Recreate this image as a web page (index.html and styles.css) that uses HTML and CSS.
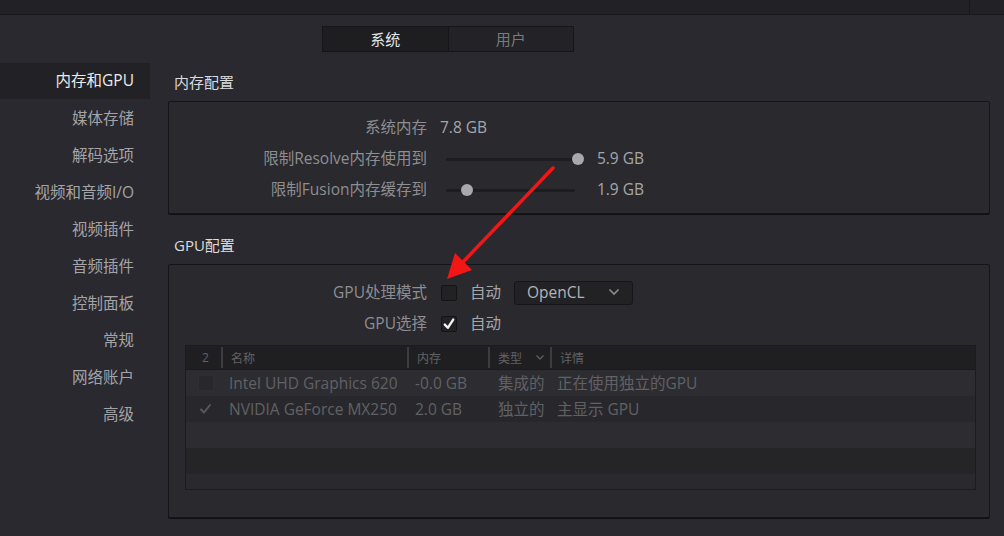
FILE: index.html
```html
<!DOCTYPE html>
<html lang="zh-CN">
<head>
<meta charset="utf-8">
<title>偏好设置</title>
<link rel="stylesheet" href="styles.css">
</head>
<body>
<div class="topbar"><div class="topbar-left"></div><div class="topbar-right"></div></div>

<div class="tabs">
  <div class="tab tab-active">系统</div>
  <div class="tab">用户</div>
</div>

<div class="layout">
  <nav class="sidebar">
    <div class="nav-item nav-active">内存和GPU</div>
    <div class="nav-item">媒体存储</div>
    <div class="nav-item">解码选项</div>
    <div class="nav-item">视频和音频I/O</div>
    <div class="nav-item">视频插件</div>
    <div class="nav-item">音频插件</div>
    <div class="nav-item">控制面板</div>
    <div class="nav-item">常规</div>
    <div class="nav-item">网络账户</div>
    <div class="nav-item">高级</div>
  </nav>

  <main class="main">
    <h2 class="section-title">内存配置</h2>
    <section class="panel mem-panel">
      <div class="row">
        <span class="label">系统内存</span>
        <span class="value">7.8 GB</span>
      </div>
      <div class="row">
        <span class="label">限制Resolve内存使用到</span>
        <div class="slider"><div class="track"></div><div class="knob" style="left: 100%"></div></div>
        <span class="slider-value">5.9 GB</span>
      </div>
      <div class="row">
        <span class="label">限制Fusion内存缓存到</span>
        <div class="slider"><div class="track track-short"></div><div class="knob" style="left: 16%"></div></div>
        <span class="slider-value">1.9 GB</span>
      </div>
    </section>

    <h2 class="section-title">GPU配置</h2>
    <section class="panel gpu-panel">
      <div class="row">
        <span class="label">GPU处理模式</span>
        <span class="checkbox"></span>
        <span class="value">自动</span>
        <div class="dropdown">
          <span>OpenCL</span>
          <svg class="chev" width="12" height="8" viewBox="0 0 12 8"><path d="M1.5 1.5 L6 6 L10.5 1.5" fill="none" stroke="#8c8c8f" stroke-width="1.6"/></svg>
        </div>
      </div>
      <div class="row">
        <span class="label">GPU选择</span>
        <span class="checkbox">
          <svg width="16" height="16" viewBox="0 0 16 16"><path d="M3.8 8.6 L6.8 11.8 L12.2 3.6" fill="none" stroke="#f2f2f2" stroke-width="2.4" stroke-linecap="round" stroke-linejoin="round"/></svg>
        </span>
        <span class="value">自动</span>
      </div>

      <div class="table">
        <div class="thead">
          <div class="th th-num">2</div>
          <div class="th">名称</div>
          <div class="th">内存</div>
          <div class="th th-type">类型<svg width="10" height="7" viewBox="0 0 10 7"><path d="M1.5 1.5 L5 5 L8.5 1.5" fill="none" stroke="#5c5c60" stroke-width="1.4"/></svg></div>
          <div class="th">详情</div>
        </div>
        <div class="tr tr-a">
          <div class="td td-num"><span class="mini-box"></span></div>
          <div class="td">Intel UHD Graphics 620</div>
          <div class="td">-0.0 GB</div>
          <div class="td">集成的</div>
          <div class="td">正在使用独立的GPU</div>
        </div>
        <div class="tr tr-b">
          <div class="td td-num"><svg width="14" height="12" viewBox="0 0 14 12"><path d="M2 6.5 L5 9.5 L11 2" fill="none" stroke="#58585c" stroke-width="2" stroke-linecap="round"/></svg></div>
          <div class="td">NVIDIA GeForce MX250</div>
          <div class="td">2.0 GB</div>
          <div class="td">独立的</div>
          <div class="td">主显示 GPU</div>
        </div>
        <div class="tr tr-a"></div>
        <div class="tr tr-c"></div>
        <div class="tr tr-end"></div>
      </div>
    </section>
  </main>
</div>

<svg class="arrow" width="1004" height="536" viewBox="0 0 1004 536">
  <line x1="553" y1="168" x2="462" y2="263" stroke="#f21616" stroke-width="3.5" stroke-linecap="round"/>
  <polygon points="447,279 472,270 455,253" fill="#f21616"/>
</svg>
</body>
</html>
```

FILE: styles.css
```css
* { box-sizing: border-box; }

html, body {
  margin: 0;
  padding: 0;
  width: 1004px;
  height: 536px;
  overflow: hidden;
  background: #29292f;
  font-family: "Open Sans", "Noto Sans CJK SC", sans-serif;
  font-size: 15.5px;
  color: #a2a2a6;
}

.topbar {
  display: flex;
  height: 15px;
  background: #222226;
  border-bottom: 1px solid #18181b;
}
.topbar-left { width: 969px; }
.topbar-right { flex: 1; border-left: 1px solid #18181b; }

.tabs {
  display: flex;
  width: 252px;
  height: 26px;
  margin: 11px 0 0 322px;
  border: 1px solid #161619;
  font-size: 15px;
}
.tab {
  flex: 1;
  display: flex;
  align-items: center;
  justify-content: center;
  background: #232327;
  color: #7a7a7e;
  line-height: 1;
}
.tab-active {
  background: #1e1e21;
  color: #e6e6e6;
  border-right: 1px solid #161619;
}

.layout {
  display: flex;
  margin-top: 11px;
}

.sidebar {
  width: 150px;
  flex: 0 0 150px;
  display: flex;
  flex-direction: column;
}
.nav-item {
  height: 37px;
  display: flex;
  align-items: center;
  justify-content: flex-end;
  padding: 0 16px 3px 0;
  color: #a4a4a8;
}
.nav-active {
  height: 36px;
  margin-bottom: 1px;
  background: #222226;
  color: #ebebeb;
}

.main {
  flex: 0 0 822px;
  margin-left: 18px;
}

.section-title {
  margin: 0;
  height: 38px;
  display: flex;
  align-items: center;
  padding: 0 0 2px 6px;
  font-size: 15px;
  font-weight: normal;
  color: #dcdcde;
}

.panel {
  border: 1px solid #151518;
  border-radius: 2px;
  box-shadow: 0 1px 0 #111113;
  background: #29292e;
}
.mem-panel {
  padding: 10px 0 8px;
  margin-bottom: 12px;
}
.gpu-panel {
  padding: 12px 0 27px;
}

.row {
  display: flex;
  align-items: center;
  height: 31px;
  gap: 13px;
  padding-bottom: 2px;
}
.label {
  width: 258px;
  text-align: right;
  color: #8e8e92;
}
.value { color: #a6a6aa; }

.slider {
  position: relative;
  width: 132px;
  height: 12px;
  margin-left: 6px;
  margin-top: 2px;
}
.track {
  position: absolute;
  left: 0;
  right: 0;
  top: 5px;
  height: 3px;
  border-radius: 2px;
  background: #1d1d20;
}
.track-short { right: 3px; }
.knob {
  position: absolute;
  top: 0;
  width: 12px;
  height: 12px;
  margin-left: -6px;
  border-radius: 50%;
  background: #a9a9ac;
}
.slider-value {
  width: 53px;
  text-align: right;
  color: #a6a6aa;
}

.checkbox {
  width: 16px;
  height: 16px;
  margin: 2px 0 0 1px;
  background: #222225;
  border: 1px solid #141416;
  border-radius: 2px;
  display: flex;
  align-items: center;
  justify-content: center;
}
.checkbox svg { display: block; flex: 0 0 16px; }

.dropdown {
  width: 119px;
  height: 24px;
  margin-top: 2px;
  display: flex;
  align-items: center;
  justify-content: space-between;
  padding: 0 12px 1px 12px;
  background: #222225;
  border: 1px solid #161619;
  border-radius: 3px;
  color: #b4b4b8;
}
.chev { display: block; }

.table {
  margin: 6px 13px 0 16px;
  height: 145px;
  border: 1px solid #1c1c1f;
  background: #2a2a2f;
  overflow: hidden;
}
.thead, .tr {
  display: grid;
  grid-template-columns: 35px 186px 81px 62px 1fr;
}
.thead {
  height: 24px;
  background: #1f1f22;
  border-bottom: 1px solid #1a1a1c;
  font-size: 12px;
  color: #626266;
}
.th {
  display: flex;
  align-items: center;
  padding-left: 8px;
  border-left: 2px solid #3c3c41;
  margin: 1px 0;
}
.th-num {
  border-left: none;
  justify-content: center;
  padding-left: 4px;
}
.th-type {
  justify-content: space-between;
  padding-right: 5px;
}
.th-type svg { display: block; }

.tr {
  height: 26px;
  color: #616165;
}
.tr-a { background: #2c2c31; }
.tr-b { background: #28282c; }
.tr-c { background: #252528; }
.tr-end { height: 20px; background: #2a2a2e; }
.td {
  display: flex;
  align-items: center;
  padding: 0 0 1px 8px;
  white-space: nowrap;
}
.td:nth-child(3) { padding-left: 8px; }
.td:nth-child(4) { padding-left: 10px; }
.td:nth-child(5) { padding-left: 7px; }
.td-num {
  justify-content: center;
  padding-left: 4px;
}
.td-num svg { display: block; }
.mini-box {
  width: 16px;
  height: 16px;
  background: #28282c;
  border: 1px solid #2e2e33;
}

.arrow {
  position: absolute;
  left: 0;
  top: 0;
  pointer-events: none;
}
```
